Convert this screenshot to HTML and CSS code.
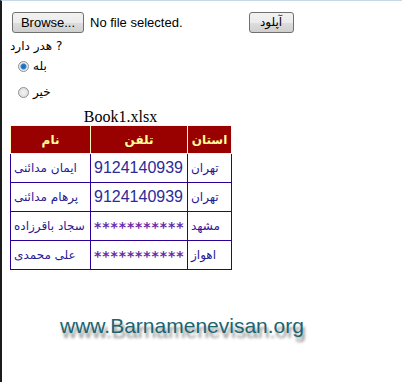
FILE: index.html
```html
<!DOCTYPE html>
<html>
<head>
<meta charset="utf-8">
<link rel="stylesheet" href="styles.css">
</head>
<body>
<div class="page">
  <div class="upload-row">
    <span class="btn browse">Browse...</span>
    <span class="nofile">No file selected.</span>
    <span class="btn upload">آپلود</span>
  </div>
  <div class="question">هدر دارد ?</div>
  <div class="radio-row"><span class="radio checked"></span><span class="rlabel">بله</span></div>
  <div class="radio-row"><span class="radio"></span><span class="rlabel">خیر</span></div>
  <div class="table-wrap">
    <div class="caption">Book1.xlsx</div>
    <table class="grid">
      <colgroup><col class="c-name"><col class="c-tel"><col class="c-city"></colgroup>
      <tr class="head"><th>نام</th><th>تلفن</th><th>استان</th></tr>
      <tr><td class="fa"><span dir="rtl">ایمان مدائنی</span></td><td class="num">9124140939</td><td class="fa"><span dir="rtl">تهران</span></td></tr>
      <tr><td class="fa"><span dir="rtl">پرهام مدائنی</span></td><td class="num">9124140939</td><td class="fa"><span dir="rtl">تهران</span></td></tr>
      <tr><td class="fa"><span dir="rtl">سجاد باقرزاده</span></td><td class="stars">***********</td><td class="fa"><span dir="rtl">مشهد</span></td></tr>
      <tr><td class="fa"><span dir="rtl">علی محمدی</span></td><td class="stars">***********</td><td class="fa"><span dir="rtl">اهواز</span></td></tr>
    </table>
  </div>
  <div class="watermark">www.Barnamenevisan.org</div>
</div>
</body>
</html>
```
FILE: styles.css
```css
html, body {
  margin: 0;
  padding: 0;
  background: #fff;
}
body {
  width: 402px;
  height: 382px;
  overflow: hidden;
  box-sizing: border-box;
  border-left: 2px solid #1c1c1c;
  border-top: 1px solid #c8d7ea;
}
.page {
  padding: 11px 0 0 8px;
  font-family: "Liberation Sans", Arial, sans-serif;
  font-size: 13px;
  color: #000;
}
.upload-row {
  display: flex;
  align-items: center;
  height: 21px;
  padding-left: 2px;
}
.btn {
  box-sizing: border-box;
  height: 21px;
  display: inline-flex;
  align-items: center;
  justify-content: center;
  border: 1px solid #707070;
  border-radius: 3px;
  background: linear-gradient(#f2f2f2, #ebebeb 50%, #dddddd 51%, #cfcfcf);
  font-size: 13px;
}
.browse {
  width: 72px;
}
.nofile {
  margin-left: 6px;
  font-size: 13px;
}
.upload {
  width: 45px;
  margin-left: 66px;
  font-family: "DejaVu Sans", sans-serif;
  font-size: 12px;
  padding-bottom: 2px;
}
.question {
  margin-top: 6px;
  font-family: "DejaVu Sans", sans-serif;
  font-size: 12px;
  line-height: 14px;
}
.radio-row {
  display: flex;
  align-items: center;
  height: 26px;
  padding-left: 8px;
}
.radio {
  width: 11px;
  height: 11px;
  box-sizing: border-box;
  border-radius: 50%;
  border: 1px solid #8e8f8f;
  background: radial-gradient(circle, #f4f4f4, #d8d8d8);
}
.radio.checked {
  background: radial-gradient(circle, #1c64b0 0, #2a7fd0 2.5px, #e8eef5 3.5px, #dcdcdc 100%);
}
.rlabel {
  margin-left: 4px;
  font-family: "DejaVu Sans", sans-serif;
  font-size: 12px;
}
.table-wrap {
  width: 221px;
  margin-top: 3px;
}
.caption {
  text-align: center;
  font-family: "Liberation Serif", "Times New Roman", serif;
  font-size: 16px;
  line-height: 17px;
}
.grid {
  border-collapse: collapse;
  table-layout: fixed;
  width: 221px;
  border: 1px solid #2a0096;
}
.c-name { width: 80px; }
.c-tel { width: 97px; }
.c-city { width: 44px; }
.grid th {
  background: #990000;
  color: #ffff99;
  border: 1px solid #fffbc0;
  height: 27px;
  font-family: "DejaVu Sans", sans-serif;
  font-size: 12px;
  font-weight: bold;
  padding: 0 3px;
}
.grid td {
  border: 1px solid #2a0096;
  height: 28px;
  padding: 0 3px;
  color: #2a1a96;
  white-space: nowrap;
  overflow: hidden;
  text-align: left;
}
.grid td.fa {
  font-family: "DejaVu Sans", sans-serif;
  font-size: 12px;
}
.grid td.num {
  font-family: "Liberation Sans", Arial, sans-serif;
  font-size: 16px;
  color: #2b2b9a;
}
.grid td.stars {
  font-family: "DejaVu Sans", sans-serif;
  font-size: 14px;
  font-weight: bold;
  letter-spacing: 0.9px;
  color: #6a2aa8;
  line-height: 16px;
  height: 23px;
  vertical-align: bottom;
  padding-bottom: 5px;
}
.watermark {
  margin-top: 44px;
  margin-left: 50px;
  font-family: "Liberation Sans", Arial, sans-serif;
  font-size: 21px;
  color: #1b6470;
  text-shadow: 2px 5px 3px rgba(0, 0, 0, 0.45);
}
```
